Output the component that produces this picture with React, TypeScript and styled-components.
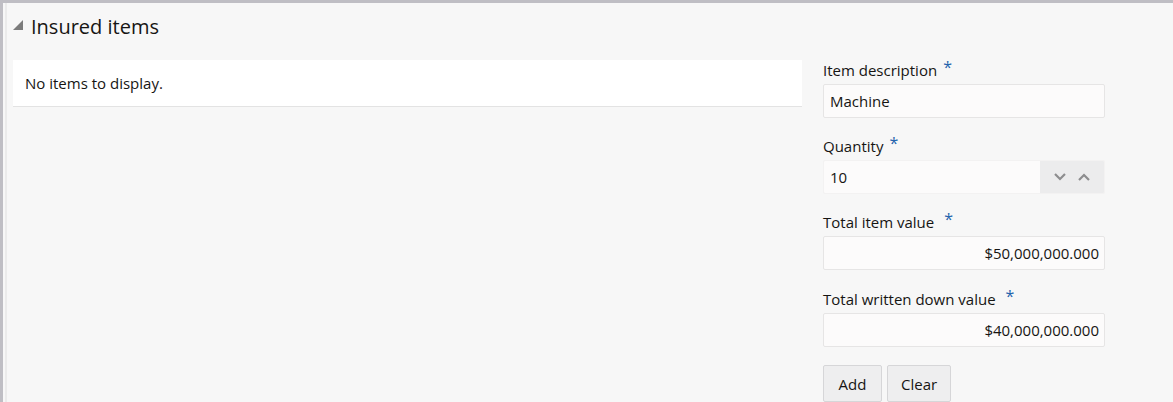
import React from "react";
import styled, { createGlobalStyle } from "styled-components";

const Global = createGlobalStyle`
  html, body { margin: 0; padding: 0; background: #f7f7f7; }
  body { font-family: "Open Sans", "Noto Sans", sans-serif; color: #161513; }
  * { box-sizing: border-box; }
`;

const Frame = styled.div`
  width: 1173px;
  height: 402px;
  overflow: hidden;
  background: #f7f7f7;
  border-top: 3px solid #bfbec4;
  border-left: 3px solid #bfbec4;
  padding-left: 2px;
`;

const Inner = styled.div`
  height: 100%;
  border-left: 2px solid #ebebeb;
  padding: 10px 0 0 6px;
`;

const Header = styled.div`
  display: flex;
  align-items: center;
  gap: 8px;
  height: 26px;
`;

const Caret = styled.svg`
  margin-top: -3px;
`;

const Title = styled.h2`
  margin: 0;
  font-size: 20px;
  font-weight: 400;
  color: #161513;
`;

const Body = styled.div`
  display: flex;
  align-items: flex-start;
  margin-top: 21px;
`;

const ListPanel = styled.div`
  width: 789px;
  height: 47px;
  background: #ffffff;
  border-bottom: 1px solid #e3e3e3;
  display: flex;
  align-items: center;
  padding-left: 12px;
  font-size: 15px;
  color: #161513;
`;

const Form = styled.div`
  margin-left: 21px;
  margin-top: 1px;
  width: 282px;
  display: flex;
  flex-direction: column;
`;

const Field = styled.div<{ $gap?: number }>`
  display: flex;
  flex-direction: column;
  margin-bottom: ${(p) => p.$gap ?? 19}px;
`;

const Label = styled.label`
  font-size: 15px;
  line-height: 18px;
  color: #161513;
  margin-bottom: 5px;
`;

const Req = styled.span`
  color: #1f64ad;
  font-size: 16px;
  margin-left: 6px;
  position: relative;
  top: -3px;
`;

const InputBox = styled.div<{ $right?: boolean }>`
  height: 34px;
  background: #fcfbfb;
  border: 1px solid #e6e5e5;
  border-radius: 2px;
  display: flex;
  align-items: center;
  justify-content: ${(p) => (p.$right ? "flex-end" : "flex-start")};
  padding: 0 5px 0 6px;
  font-size: 15px;
  color: #161513;
  overflow: hidden;
`;

const NumberBox = styled(InputBox)`
  padding-right: 0;
  border-color: #f3f2f2;
`;

const Grow = styled.span`
  flex: 1;
`;

const Spinner = styled.div`
  width: 64px;
  height: 100%;
  background: #ececed;
  display: flex;
  align-items: center;
  justify-content: space-around;
  padding: 0 8px;
`;

const Buttons = styled.div`
  display: flex;
  gap: 5px;
  margin-top: -1px;
`;

const Button = styled.button`
  height: 37px;
  min-width: 59px;
  padding: 0 13px;
  background: #eeeeef;
  border: 1px solid #d6d6d8;
  border-radius: 2px;
  font-family: inherit;
  font-size: 15px;
  color: #161513;
`;

const Chevron = ({ up }: { up?: boolean }) => (
  <svg width="14" height="10" viewBox="0 0 14 10">
    <path
      d={up ? "M2 8 L7 3 L12 8" : "M2 2 L7 7 L12 2"}
      fill="none"
      stroke="#8d8d8f"
      strokeWidth="2.2"
    />
  </svg>
);

export default function App() {
  return (
    <>
      <Global />
      <Frame>
        <Inner>
          <Header>
            <Caret width="10" height="10" viewBox="0 0 10 10">
              <path d="M10 0 L10 10 L0 10 Z" fill="#7c7c7c" />
            </Caret>
            <Title>Insured items</Title>
          </Header>
          <Body>
            <ListPanel>No items to display.</ListPanel>
            <Form>
              <Field>
                <Label>
                  Item description<Req>*</Req>
                </Label>
                <InputBox>Machine</InputBox>
              </Field>
              <Field>
                <Label>
                  Quantity<Req>*</Req>
                </Label>
                <NumberBox>
                  <Grow>10</Grow>
                  <Spinner>
                    <Chevron />
                    <Chevron up />
                  </Spinner>
                </NumberBox>
              </Field>
              <Field $gap={20}>
                <Label>
                  Total item value <Req>*</Req>
                </Label>
                <InputBox $right>$50,000,000.000</InputBox>
              </Field>
              <Field>
                <Label>
                  Total written down value <Req>*</Req>
                </Label>
                <InputBox $right>$40,000,000.000</InputBox>
              </Field>
              <Buttons>
                <Button>Add</Button>
                <Button>Clear</Button>
              </Buttons>
            </Form>
          </Body>
        </Inner>
      </Frame>
    </>
  );
}
